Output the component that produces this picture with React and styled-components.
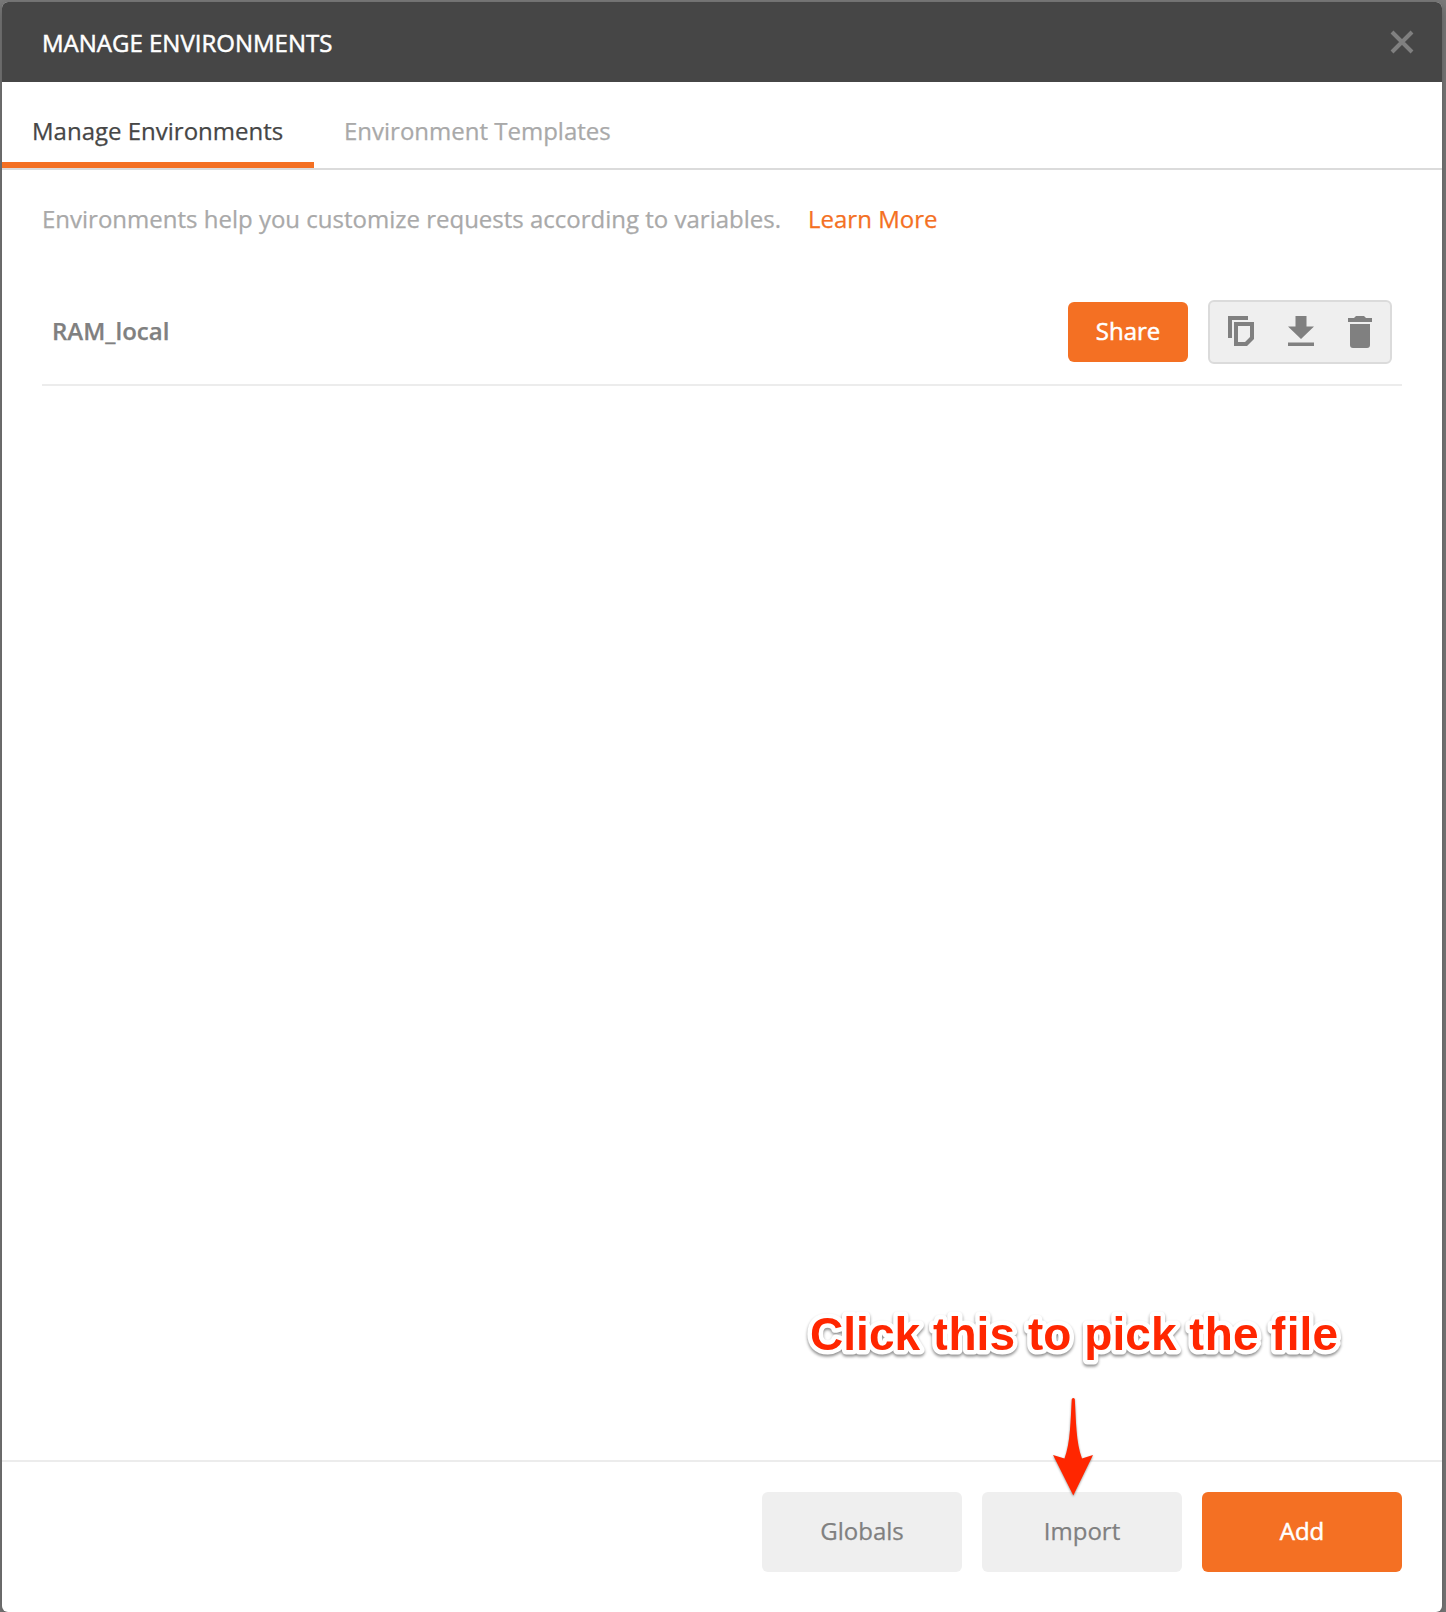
import React from "react";
import styled, { createGlobalStyle } from "styled-components";

const GlobalStyle = createGlobalStyle`
  * { box-sizing: border-box; }
  body {
    margin: 0;
    background: #7a7a7a;
    font-family: "Open Sans", sans-serif;
    font-size: 24px;
    line-height: 34px;
    -webkit-text-stroke: 0.25px currentColor;
  }
`;

const Backdrop = styled.div`
  height: 1612px;
  padding: 2px 4px 0 2px;
  overflow: hidden;
`;

const Modal = styled.section`
  position: relative;
  display: flex;
  flex-direction: column;
  height: 1610px;
  background: #fff;
  border-radius: 6px;
  box-shadow: 0 4px 12px rgba(0, 0, 0, 0.3);
`;

const Header = styled.header`
  display: flex;
  align-items: center;
  justify-content: space-between;
  height: 80px;
  padding: 0 28px 0 40px;
  background: #464646;
  border-radius: 6px 6px 0 0;
`;

const Title = styled.h1`
  margin: 0;
  padding-top: 2px;
  color: #fff;
  font-size: 24px;
  font-weight: 400;
  -webkit-text-stroke: 0.5px #fff;
`;

const IconButton = styled.button`
  display: flex;
  padding: 0;
  border: 0;
  background: none;
  color: #808080;
`;

const Tabs = styled.nav`
  display: flex;
  height: 88px;
  border-bottom: 2px solid #dbdbdb;
`;

const Tab = styled.button`
  width: ${(p) => p.$width}px;
  height: 86px;
  padding: 18px 30px 0;
  border: 0;
  border-bottom: 6px solid ${(p) => (p.$active ? "#f47023" : "transparent")};
  background: none;
  color: ${(p) => (p.$active ? "#464646" : "#a9a9a9")};
  font: inherit;
  -webkit-text-stroke: inherit;
  -webkit-text-stroke-color: currentColor;
  text-align: left;
  white-space: nowrap;
`;

const Content = styled.main`
  flex: 1;
  padding: 32px 40px 0;
`;

const Intro = styled.p`
  display: flex;
  gap: 27px;
  margin: 0;
  color: #a9a9a9;
  white-space: nowrap;
`;

const LearnMore = styled.a`
  color: #f47023;
`;

const EnvironmentRow = styled.div`
  display: flex;
  align-items: center;
  height: 108px;
  margin-top: 42px;
  padding: 2px 10px 0;
  border-bottom: 2px solid #ececec;
`;

const EnvironmentName = styled.span`
  flex: 1;
  padding-bottom: 2px;
  color: #808080;
  font-weight: 600;
`;

const Button = styled.button`
  width: ${(p) => p.$width}px;
  height: ${(p) => p.$height}px;
  padding: 0 0 2px;
  border: 0;
  border-radius: 6px;
  background: ${(p) => (p.$primary ? "#f47023" : "#efefef")};
  color: ${(p) => (p.$primary ? "#fff" : "#808080")};
  font: inherit;
  -webkit-text-stroke: ${(p) => (p.$primary ? 0.5 : 0.25)}px currentColor;
`;

const Actions = styled.div`
  display: flex;
  align-items: flex-start;
  gap: 34px;
  width: 184px;
  height: 64px;
  margin-left: 20px;
  padding: 14px 18px;
  background: #efefef;
  border: 2px solid #dbdbdb;
  border-radius: 6px;
`;

const Footer = styled.footer`
  display: flex;
  justify-content: flex-end;
  gap: 20px;
  height: 152px;
  padding: 30px 40px 0;
  border-top: 2px solid #ececec;
`;

const Callout = styled.svg`
  position: absolute;
  left: 798px;
  top: 1298px;
  overflow: visible;
  pointer-events: none;
`;

const CalloutText = styled.text`
  font: 700 46px "Liberation Sans", Arial, sans-serif;
  fill: #ff2600;
  stroke: #fff;
  stroke-width: 9px;
  stroke-linejoin: round;
  paint-order: stroke;
  filter: drop-shadow(0 2px 1.5px rgba(0, 0, 0, 0.45));
`;

const Arrow = styled.path`
  fill: #ff2600;
  filter: drop-shadow(0 1px 1px rgba(0, 0, 0, 0.4));
`;

const CloseIcon = () => (
  <svg width="24" height="24" viewBox="0 0 24 24" fill="none">
    <path d="M2 2 22 22M22 2 2 22" stroke="currentColor" strokeWidth="4" />
  </svg>
);

const CopyIcon = () => (
  <svg width="26" height="30" viewBox="0 0 26 30" fill="currentColor">
    <path d="M0 0H20V4H4V22H0Z" />
    <path fillRule="evenodd" d="M6 6H26V23L19 30H6ZM10 10V26H17L22 21V10Z" />
  </svg>
);

const DownloadIcon = () => (
  <svg width="26" height="30" viewBox="0 0 26 30" fill="currentColor">
    <path d="M7.5 0H18.5V10.5H26L13 23 0 10.5H7.5ZM0 26.5H26V30H0Z" />
  </svg>
);

const TrashIcon = () => (
  <svg width="24" height="32" viewBox="0 0 24 32" fill="currentColor">
    <path d="M0 2H6L8 0H16L18 2H24V6H0ZM2 8H22V29Q22 32 19 32H5Q2 32 2 29Z" />
  </svg>
);

export default function App() {
  return (
    <Backdrop>
      <GlobalStyle />
      <Modal>
        <Header>
          <Title>MANAGE ENVIRONMENTS</Title>
          <IconButton aria-label="Close"><CloseIcon /></IconButton>
        </Header>
        <Tabs>
          <Tab $active $width={312}>Manage Environments</Tab>
          <Tab $width={330}>Environment Templates</Tab>
        </Tabs>
        <Content>
          <Intro>
            <span>Environments help you customize requests according to variables.</span>
            <LearnMore>Learn More</LearnMore>
          </Intro>
          <EnvironmentRow>
            <EnvironmentName>RAM_local</EnvironmentName>
            <Button $primary $width={120} $height={60}>Share</Button>
            <Actions>
              <IconButton aria-label="Duplicate"><CopyIcon /></IconButton>
              <IconButton aria-label="Download"><DownloadIcon /></IconButton>
              <IconButton aria-label="Delete"><TrashIcon /></IconButton>
            </Actions>
          </EnvironmentRow>
        </Content>
        <Footer>
          <Button $width={200} $height={80}>Globals</Button>
          <Button $width={200} $height={80}>Import</Button>
          <Button $primary $width={200} $height={80}>Add</Button>
        </Footer>
        <Callout width="560" height="200" viewBox="800 1300 560 200">
          <CalloutText x="810" y="1350" textLength="528">Click this to pick the file</CalloutText>
          <Arrow d="M1071.8 1399Q1073.3 1397 1074.8 1399C1076 1420 1076 1443 1082 1458.5L1093 1455 1073.3 1495.5 1053 1455 1064.5 1458.5C1070.5 1443 1070.5 1420 1071.8 1399Z" />
        </Callout>
      </Modal>
    </Backdrop>
  );
}
